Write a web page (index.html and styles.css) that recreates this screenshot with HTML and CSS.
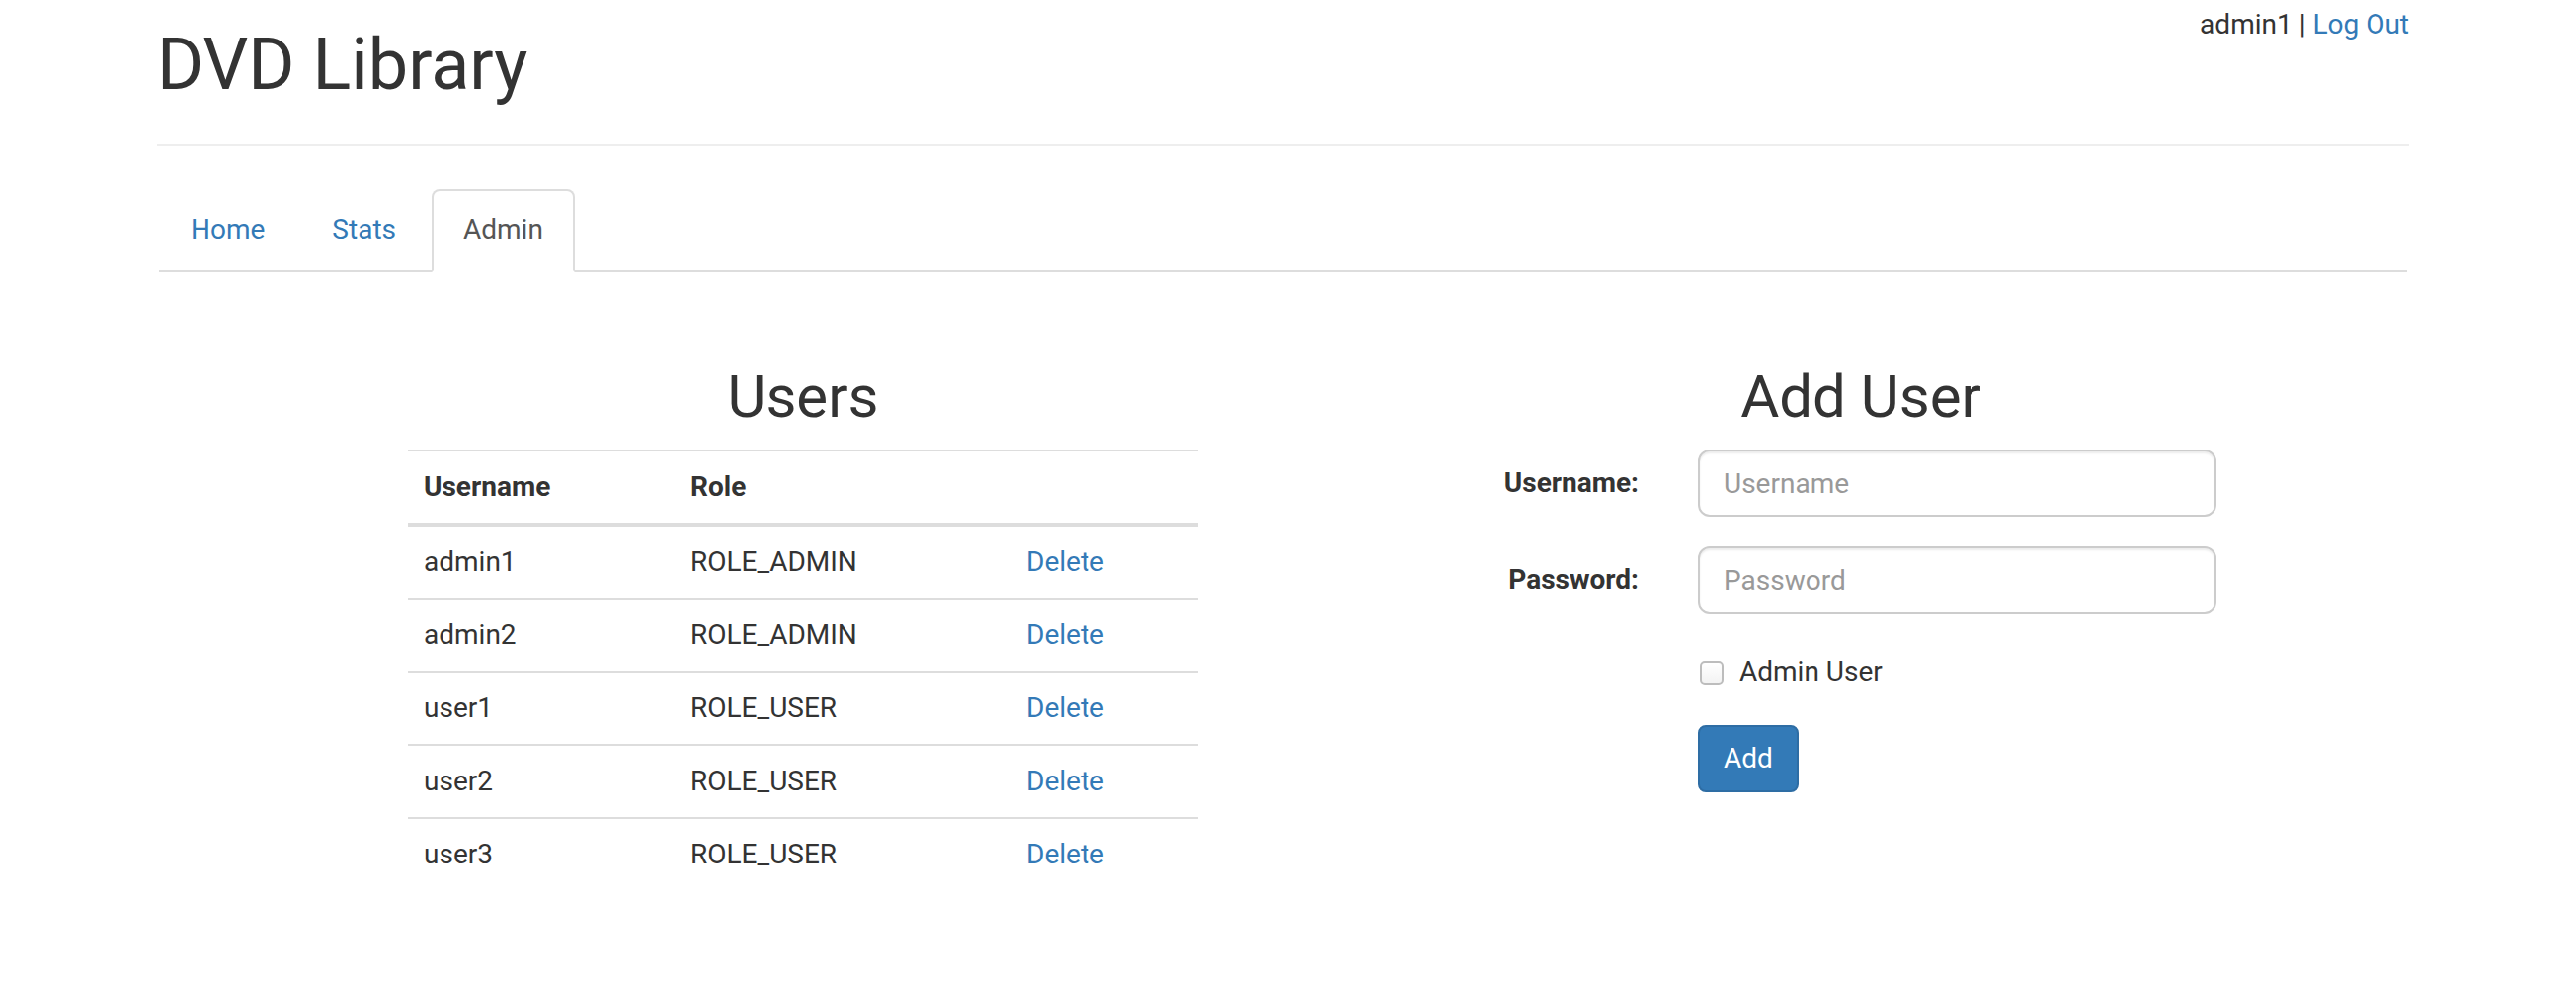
FILE: index.html
```html
<!DOCTYPE html>
<html>
<head>
<meta charset="utf-8">
<title>DVD Library</title>
<link rel="stylesheet" href="styles.css">
</head>
<body>
<div class="viewport">
  <div class="container">
    <header class="top">
      <h1 class="brand">DVD Library</h1>
      <div class="userbox">admin1 | <a href="#">Log Out</a></div>
    </header>
    <hr class="divider">
    <ul class="tabs">
      <li><a href="#">Home</a></li>
      <li><a href="#">Stats</a></li>
      <li class="active"><a href="#">Admin</a></li>
    </ul>
    <main class="cols">
      <section class="col col-left">
        <div class="users">
          <h2 class="title">Users</h2>
          <table class="table">
            <thead>
              <tr><th class="c1">Username</th><th class="c2">Role</th><th class="c3"></th></tr>
            </thead>
            <tbody>
              <tr><td>admin1</td><td>ROLE_ADMIN</td><td><a href="#">Delete</a></td></tr>
              <tr><td>admin2</td><td>ROLE_ADMIN</td><td><a href="#">Delete</a></td></tr>
              <tr><td>user1</td><td>ROLE_USER</td><td><a href="#">Delete</a></td></tr>
              <tr><td>user2</td><td>ROLE_USER</td><td><a href="#">Delete</a></td></tr>
              <tr><td>user3</td><td>ROLE_USER</td><td><a href="#">Delete</a></td></tr>
            </tbody>
          </table>
        </div>
      </section>
      <section class="col col-right">
        <h2 class="title">Add User</h2>
        <form class="form">
          <div class="form-row">
            <label class="form-label" for="un">Username:</label>
            <input class="input" id="un" type="text" placeholder="Username">
          </div>
          <div class="form-row">
            <label class="form-label" for="pw">Password:</label>
            <input class="input" id="pw" type="password" placeholder="Password">
          </div>
          <div class="form-row check-row">
            <span></span>
            <label class="check"><input type="checkbox" class="box"> Admin User</label>
          </div>
          <div class="form-row">
            <span></span>
            <div><button type="button" class="btn">Add</button></div>
          </div>
        </form>
      </section>
    </main>
  </div>
</div>
</body>
</html>
```

FILE: styles.css
```css
* { box-sizing: border-box; }
html, body { margin: 0; padding: 0; background: #fff; }
body {
  font-family: Roboto, "Helvetica Neue", Arial, sans-serif;
  font-size: 28px;
  line-height: 40px;
  color: #333;
}
a { color: #337ab7; text-decoration: none; }
.viewport { padding-right: 10px; }
.container { width: 2280px; margin: 0 auto; }

.top {
  display: flex;
  justify-content: space-between;
  align-items: flex-start;
}
.brand {
  margin: 26px 0 0 0;
  font-size: 72px;
  line-height: 79px;
  font-weight: 400;
  color: #333;
}
.userbox { margin-top: 5px; white-space: nowrap; }

.divider {
  margin: 41px 0 0 0;
  border: 0;
  border-top: 2px solid #eee;
  height: 0;
}

.tabs {
  list-style: none;
  margin: 43px 2px 0 2px;
  padding: 0;
  display: flex;
  border-bottom: 2px solid #ddd;
}
.tabs li { margin-bottom: -2px; }
.tabs a {
  display: block;
  padding: 20px 30px;
  margin-right: 4px;
  line-height: 40px;
  border: 2px solid transparent;
  border-radius: 8px 8px 0 0;
}
.tabs .active a {
  color: #555;
  background: #fff;
  border-color: #ddd;
  border-bottom-color: transparent;
}

.cols {
  display: flex;
  margin: 54px -30px 0;
}
.col { width: 1170px; padding: 0 30px; }
.col-left { padding-left: 284px; }
.users { width: 800px; }

.title {
  margin: 40px 0 20px;
  font-size: 60px;
  line-height: 66px;
  font-weight: 400;
  text-align: center;
  color: #333;
}

.table { width: 800px; border-collapse: collapse; border-spacing: 0; }
.table th, .table td {
  padding: 16px;
  line-height: 40px;
  text-align: left;
  vertical-align: top;
  border-top: 2px solid #ddd;
}
.table th { font-weight: 700; border-bottom: 4px solid #ddd; vertical-align: bottom; }
.table .c1 { width: 270px; }
.table .c2 { width: 340px; }
.table .c3 { width: 190px; }

.form-row {
  display: grid;
  grid-template-columns: 330px 525px;
  column-gap: 60px;
  margin-bottom: 30px;
}
.form-label {
  text-align: right;
  font-weight: 700;
  padding-top: 14px;
}
.input {
  display: block;
  width: 525px;
  height: 68px;
  padding: 12px 24px;
  font: inherit;
  font-size: 28px;
  line-height: 40px;
  color: #555;
  background: #fff;
  border: 2px solid #ccc;
  border-radius: 12px;
  box-shadow: inset 0 2px 2px rgba(0,0,0,.075);
  outline: none;
}
.input::placeholder { color: #999; }

.check-row { margin-bottom: 34px; }
.check {
  display: flex;
  align-items: center;
  padding-top: 9px;
  line-height: 40px;
  font-weight: 400;
}
.box {
  appearance: none;
  -webkit-appearance: none;
  width: 24px;
  height: 24px;
  margin: 2px 16px 0 2px;
  border: 2px solid #bdbdbd;
  border-radius: 5px;
  background: linear-gradient(#fff, #f3f3f3);
}

.btn {
  font: inherit;
  font-size: 28px;
  line-height: 40px;
  padding: 12px 24px;
  color: #fff;
  background: #337ab7;
  border: 2px solid #2e6da4;
  border-radius: 8px;
}
```
